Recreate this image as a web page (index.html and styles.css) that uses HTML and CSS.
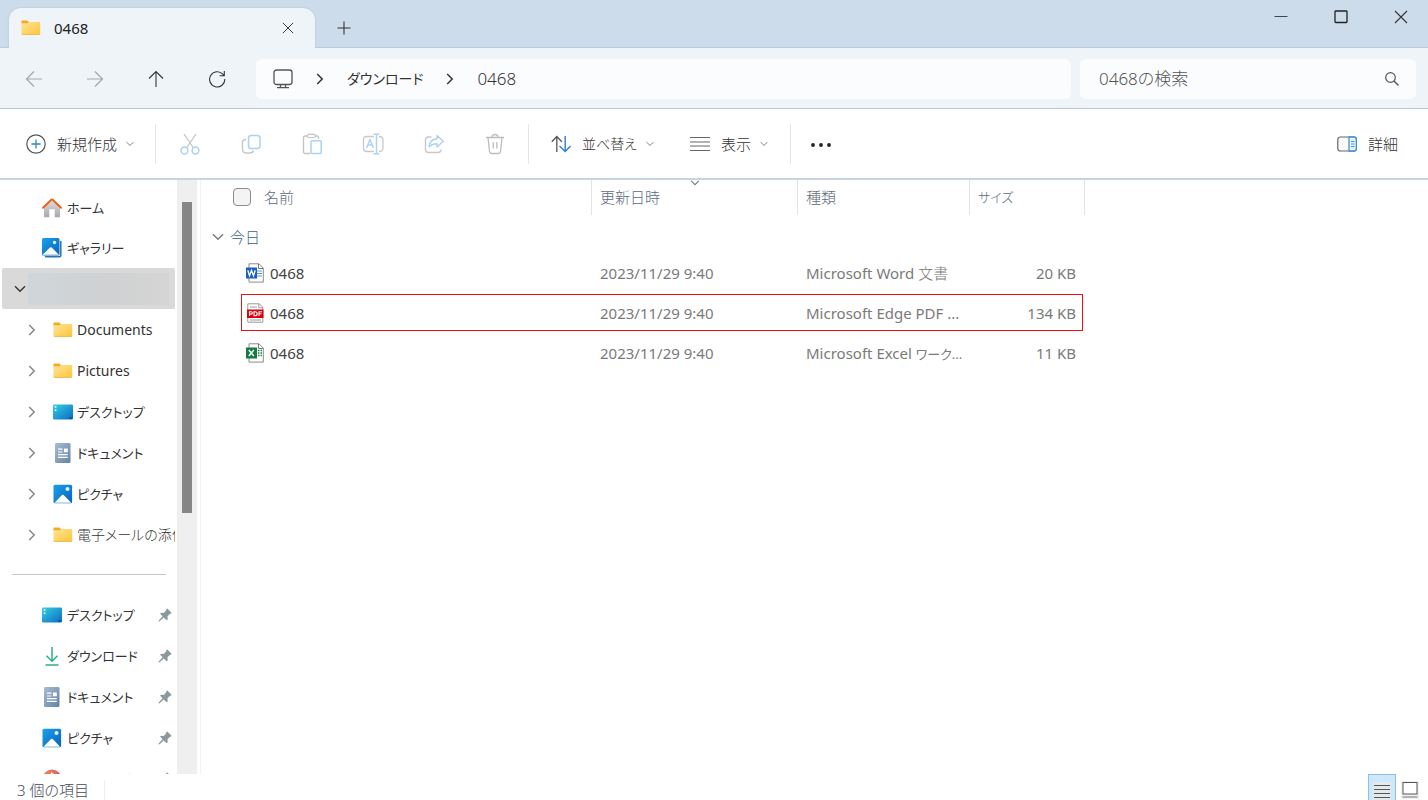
FILE: index.html
```html
<!DOCTYPE html>
<html lang="ja">
<head>
<meta charset="utf-8">
<meta name="viewport" content="width=device-width, initial-scale=1">
<title>0468</title>
<link rel="stylesheet" href="styles.css">
</head>
<body>
<svg class="sprite" aria-hidden="true">
  <defs>
    <linearGradient id="g-folder" x1="0" y1="0" x2="1" y2="1"><stop offset="0" stop-color="#ffe39a"/><stop offset="1" stop-color="#ffc737"/></linearGradient>
    <linearGradient id="g-blue" x1="0" y1="0" x2="1" y2="1"><stop offset="0" stop-color="#1ba0e8"/><stop offset="1" stop-color="#0a62c0"/></linearGradient>
    <linearGradient id="g-desk" x1="0" y1="0" x2="1" y2="1"><stop offset="0" stop-color="#35d0e2"/><stop offset="1" stop-color="#0a6ac4"/></linearGradient>
    <linearGradient id="g-doc" x1="0" y1="0" x2="1" y2="1"><stop offset="0" stop-color="#a9bdd2"/><stop offset="1" stop-color="#6283a8"/></linearGradient>
    <linearGradient id="g-home" x1="0" y1="0" x2="0" y2="1"><stop offset="0" stop-color="#dedede"/><stop offset="1" stop-color="#a9a9a9"/></linearGradient>
    <linearGradient id="g-music" x1="0" y1="0" x2="1" y2="0"><stop offset="0" stop-color="#ee8a5e"/><stop offset="1" stop-color="#dc5d5a"/></linearGradient>
  </defs>
  <symbol id="folder" viewBox="0 0 20 20"><path d="M.5 4V3.200q0-.7.700-.7h5q.5 0 .8.400l1 1.600v2H.5z" fill="#f3ac1c"/><path d="M.5 5.200h6.500l1.200-1.200h10.300q.7 0 .7.700v11.100q0 .7-.7.700H1.200q-.7 0-.7-.7z" fill="url(#g-folder)"/><path d="M.8 16.400h18" stroke="#e8ae3a" stroke-width=".8"/></symbol>
  <symbol id="home" viewBox="0 0 20 20"><path d="M2 9l8-7 8 7v9.500q0 .7-.7.700h-4.600v-8H7.300v8H2.700q-.7 0-.7-.7z" fill="url(#g-home)"/><path d="M1 9.800l8.300-8q.7-.6 1.400 0l8.300 8" fill="none" stroke="#e8661c" stroke-width="2" stroke-linecap="round" stroke-linejoin="round"/></symbol>
  <symbol id="gallery" viewBox="0 0 20 20"><path d="M18.800 3.500v14.300q0 1-1 1H3.500" fill="none" stroke="#2a72b8" stroke-width="1.500" stroke-linecap="round"/><rect width="17.500" height="17.500" rx="1.500" fill="url(#g-blue)"/><circle cx="12.500" cy="4.500" r="1.700" fill="#d8f4ff"/><path d="M.5 16.800L8 9.600q.8-.7 1.600 0l7.300 7.200z" fill="#fff"/></symbol>
  <symbol id="picture" viewBox="0 0 20 20"><rect x=".5" y=".7" width="18.600" height="18.600" rx="1.500" fill="url(#g-blue)"/><circle cx="14.500" cy="5" r="2" fill="#d8f4ff"/><path d="M1.500 18.700L9 11q.8-.7 1.600 0l7.600 7.700z" fill="#fff"/></symbol>
  <symbol id="desktop" viewBox="0 0 20 20"><rect x="0" y="2.500" width="20" height="15" rx="1.200" fill="url(#g-desk)"/><path d="M1.800 4.200h1.600v1.600H1.800zM1.800 7.400h1.600V9H1.800z" fill="#fff"/><path d="M16.200 16h2.600" stroke="#063d83"/></symbol>
  <symbol id="document" viewBox="0 0 20 20"><rect x="2" y="0" width="15.500" height="20" rx="1.300" fill="url(#g-doc)"/><path d="M5 6.200h4.500M5 9h4.500M5 11.700h9.700M5 14.300h9.700" stroke="#fff" stroke-width="1.200"/><rect x="11" y="5.500" width="3.800" height="3.800" fill="#fff"/></symbol>
  <symbol id="download" viewBox="0 0 20 20"><path d="M10 1v14M4.500 9.800L10 15.300l5.500-5.500M3.500 19h13" fill="none" stroke="#2bb08c" stroke-width="1.500"/></symbol>
  <symbol id="music" viewBox="0 0 20 20"><circle cx="10" cy="10" r="9.500" fill="url(#g-music)"/><path d="M9.700 14V4.500l4 2.500" fill="none" stroke="#fff" stroke-width="1.600"/><circle cx="8" cy="14" r="2.200" fill="#fff"/></symbol>
  <symbol id="pin" viewBox="0 0 14 14"><path d="M8.600.8q.5-.5 1 0l3.700 3.800q.5.500-.1.900l-1.400.4-2.300 2.400.2 2.700q0 .5-.4.800l-.7.500-2.900-2.900L1.600 13.300.5 13.500l.2-1.100 3.900-4.100-2.500-2.500.6-.7q.3-.4.800-.4l2.300.2L8 2.400z" fill="#8d989e"/></symbol>
  <symbol id="chev-right" viewBox="0 0 10 12"><path d="M2.200 1l5 5-5 5" fill="none" stroke="currentColor" stroke-width="1.500"/></symbol>
  <symbol id="chev-down" viewBox="0 0 12 8"><path d="M1 1.200l5 5 5-5" fill="none" stroke="currentColor" stroke-width="1.400"/></symbol>
  <symbol id="plus" viewBox="0 0 14 14"><path d="M7 .5v13M.5 7h13" stroke="currentColor" stroke-width="1.100"/></symbol>
  <symbol id="close" viewBox="0 0 14 14"><path d="M1 1l12 12M13 1L1 13" stroke="currentColor" stroke-width="1.100"/></symbol>
</svg>

<div class="window">
  <header class="titlebar">
    <div class="tab">
      <svg class="icon"><use href="#folder"/></svg>
      <span class="tab-name">0468</span>
      <button class="plain tab-close" aria-label="タブを閉じる"><svg class="glyph small"><use href="#close"/></svg></button>
    </div>
    <button class="plain new-tab" aria-label="新しいタブ"><svg class="glyph"><use href="#plus"/></svg></button>
    <div class="caption">
      <button class="plain caption-btn" aria-label="最小化"><svg class="glyph" viewBox="0 0 14 14"><path d="M.5 6.500h13" stroke="#444"/></svg></button>
      <button class="plain caption-btn" aria-label="最大化"><svg class="glyph" viewBox="0 0 14 14"><rect x="1" y="1" width="12" height="11.500" rx=".8" fill="none" stroke="#222" stroke-width="1.300"/></svg></button>
      <button class="plain caption-btn" aria-label="閉じる"><svg class="glyph"><use href="#close"/></svg></button>
    </div>
  </header>

  <nav class="navbar" aria-label="ナビゲーション">
    <div class="history">
      <button class="plain nav-btn dim" aria-label="戻る"><svg class="nav-icon" viewBox="0 0 18 18"><path d="M17 9H1.500M9 1.500L1.500 9 9 16.500" fill="none" stroke="currentColor" stroke-width="1.200"/></svg></button>
      <button class="plain nav-btn dim" aria-label="進む"><svg class="nav-icon" viewBox="0 0 18 18"><path d="M1 9h15.500M9 1.500L16.500 9 9 16.500" fill="none" stroke="currentColor" stroke-width="1.200"/></svg></button>
      <button class="plain nav-btn" aria-label="上へ"><svg class="nav-icon" viewBox="0 0 18 18"><path d="M9 17V1.500M2 8.500l7-7 7 7" fill="none" stroke="currentColor" stroke-width="1.100"/></svg></button>
      <button class="plain nav-btn" aria-label="更新"><svg class="nav-icon" viewBox="0 0 18 18"><path d="M16.800 9A7.600 7.600 0 1 1 14.800 4.200L16 5.500M16.300 1v4.700h-4.700" fill="none" stroke="currentColor" stroke-width="1.100"/></svg></button>
    </div>
    <div class="address">
      <svg class="pc" viewBox="0 0 20 20"><rect x="1" y="1" width="18" height="14.500" rx="2.500" fill="none" stroke="#555" stroke-width="1.300"/><path d="M7.500 15.500v2.700M12.500 15.500v2.700M4 18.700h12" stroke="#555" stroke-width="1.300"/></svg>
      <svg class="chev"><use href="#chev-right"/></svg>
      <a class="crumb crumb-kana" href="#downloads">ダウンロード</a>
      <svg class="chev"><use href="#chev-right"/></svg>
      <a class="crumb" href="#0468">0468</a>
    </div>
    <div class="search">
      <input class="search-input" type="text" placeholder="0468の検索" aria-label="0468の検索">
      <svg class="search-icon" viewBox="0 0 14 14"><circle cx="5.500" cy="5.500" r="4.800" fill="none" stroke="#555" stroke-width="1.200"/><path d="M9 9l4.500 4.500" stroke="#555" stroke-width="1.400"/></svg>
    </div>
  </nav>

  <div class="toolbar" role="toolbar" aria-label="コマンド バー">
    <button class="plain command new">
      <svg class="icon" viewBox="0 0 20 20"><circle cx="10" cy="10" r="9.200" fill="none" stroke="#555" stroke-width="1.200"/><path d="M10 5.500v9M5.500 10h9" stroke="#2f86d0" stroke-width="1.300"/></svg>
      <span>新規作成</span><svg class="drop"><use href="#chev-down"/></svg>
    </button>
    <span class="divider"></span>
    <div class="actions">
      <button class="plain action" aria-label="切り取り" disabled><svg class="icon large" viewBox="0 0 22 22"><path d="M5 1l9.500 14M17 1L7.500 15" stroke="#c6c6c6" stroke-width="1.300"/><g fill="none" stroke="#abd2f3" stroke-width="1.500"><circle cx="5.500" cy="17.500" r="3.400"/><circle cx="16.500" cy="17.500" r="3.400"/></g></svg></button>
      <button class="plain action" aria-label="コピー" disabled><svg class="icon large" viewBox="0 0 22 22"><path d="M6 6.500H5.500q-3 0-3 3V16q0 4 4 4h3.500q3 0 3.500-2.500" fill="none" stroke="#c9c9c9" stroke-width="1.400"/><rect x="8.500" y="2.500" width="11.500" height="13" rx="2.800" fill="none" stroke="#abd2f3" stroke-width="1.500"/></svg></button>
      <button class="plain action" aria-label="貼り付け" disabled><svg class="icon large" viewBox="0 0 22 22"><path d="M9 20.500H4q-1.500 0-1.500-1.500V4.500Q2.500 3 4 3h2.500M14.500 3H16q1.500 0 1.500 1.500V6" fill="none" stroke="#c4c4c4" stroke-width="1.300"/><rect x="6.500" y="1.300" width="8" height="3.200" rx="1.500" fill="none" stroke="#c4c4c4" stroke-width="1.200"/><rect x="10" y="7.800" width="10.200" height="12.800" rx="1.200" fill="none" stroke="#abd2f3" stroke-width="1.500"/></svg></button>
      <button class="plain action" aria-label="名前の変更" disabled><svg class="icon large" viewBox="0 0 22 22"><path d="M12 3.500H4.500q-3 0-3 3v9q0 3 3 3H12M17 3.500q4 0 4 3.500v8q0 3.500-4 3.500" fill="none" stroke="#c9c9c9" stroke-width="1.300"/><path d="M4.500 15L8 6.500l3.500 8.500M5.600 12h4.900M14.500 1.500v19M11.500 1.200h6M11.500 20.700h6" fill="none" stroke="#abd2f3" stroke-width="1.400"/></svg></button>
      <button class="plain action" aria-label="共有" disabled><svg class="icon large" viewBox="0 0 22 22"><path d="M8.500 4H5.500Q2.500 4 2.500 7v9.500q0 3 3 3H15q3 0 3-3" fill="none" stroke="#c9c9c9" stroke-width="1.400"/><path d="M14 2.500l6.300 5.800L14 14v-3.200q-4.500-.3-8 3Q6.700 6.500 14 5.800z" fill="none" stroke="#abd2f3" stroke-width="1.400" stroke-linejoin="round"/></svg></button>
      <button class="plain action" aria-label="削除" disabled><svg class="icon large" viewBox="0 0 22 22"><path d="M2 4.500h18M4 4.500l1.500 14q.2 2 2 2h7q1.800 0 2-2L18 4.500M8 4.300Q8 1.500 11 1.500t3 2.800M9.200 9v6.500M12.800 9v6.500" fill="none" stroke="#bdbdbd" stroke-width="1.300"/></svg></button>
    </div>
    <span class="divider"></span>
    <button class="plain command sort">
      <svg class="icon" viewBox="0 0 20 20"><path d="M5.800 18V2.500M.8 7.800l5-5.300 5 5.300" fill="none" stroke="#555" stroke-width="1.300"/><path d="M14.200 2v15.500M8.500 12l5.700 5.500 5.300-5.500" fill="none" stroke="#2f7fcf" stroke-width="1.400"/></svg>
      <span>並べ替え</span><svg class="drop"><use href="#chev-down"/></svg>
    </button>
    <button class="plain command view">
      <svg class="icon" viewBox="0 0 20 20"><path d="M0 3.500h20M0 8h20M0 12h20M0 16.500h20" stroke="#666" stroke-width="1.200"/></svg>
      <span>表示</span><svg class="drop"><use href="#chev-down"/></svg>
    </button>
    <span class="divider"></span>
    <button class="plain more" aria-label="もっと見る"><svg class="icon" viewBox="0 0 20 20"><g fill="#222"><circle cx="2" cy="11" r="1.900"/><circle cx="10" cy="11" r="1.900"/><circle cx="18" cy="11" r="1.900"/></g></svg></button>
    <button class="plain command details">
      <svg class="icon" viewBox="0 0 20 20"><rect x=".8" y="3" width="18.500" height="14" rx="2.500" fill="#fafafa" stroke="#666" stroke-width="1.200"/><path d="M12 3h5q2.300 0 2.300 2.500v9Q19.300 17 17 17h-5z" fill="#eaf5fe" stroke="#3e90d8" stroke-width="1.300"/><path d="M14 7.500h3.500M14 10h3.500M14 12.500h3.500" stroke="#3e90d8" stroke-width="1.200"/></svg>
      <span>詳細</span>
    </button>
  </div>

  <div class="body">
    <aside class="sidebar">
      <ul class="tree">
        <li class="node short"><svg class="icon"><use href="#home"/></svg><span class="label kana">ホーム</span></li>
        <li class="node short"><svg class="icon"><use href="#gallery"/></svg><span class="label kana">ギャラリー</span></li>
        <li class="node selected"><svg class="open"><use href="#chev-down"/></svg><span class="masked"></span></li>
        <li class="node child"><svg class="chev"><use href="#chev-right"/></svg><svg class="icon"><use href="#folder"/></svg><span class="label">Documents</span></li>
        <li class="node child"><svg class="chev"><use href="#chev-right"/></svg><svg class="icon"><use href="#folder"/></svg><span class="label">Pictures</span></li>
        <li class="node child"><svg class="chev"><use href="#chev-right"/></svg><svg class="icon"><use href="#desktop"/></svg><span class="label kana">デスクトップ</span></li>
        <li class="node child"><svg class="chev"><use href="#chev-right"/></svg><svg class="icon"><use href="#document"/></svg><span class="label kana">ドキュメント</span></li>
        <li class="node child"><svg class="chev"><use href="#chev-right"/></svg><svg class="icon"><use href="#picture"/></svg><span class="label kana">ピクチャ</span></li>
        <li class="node child"><svg class="chev"><use href="#chev-right"/></svg><svg class="icon"><use href="#folder"/></svg><span class="label light">電子メールの添付</span></li>
        <li class="rule" role="separator"></li>
        <li class="node"><svg class="icon"><use href="#desktop"/></svg><span class="label kana">デスクトップ</span><svg class="pin"><use href="#pin"/></svg></li>
        <li class="node"><svg class="icon"><use href="#download"/></svg><span class="label kana">ダウンロード</span><svg class="pin"><use href="#pin"/></svg></li>
        <li class="node"><svg class="icon"><use href="#document"/></svg><span class="label kana">ドキュメント</span><svg class="pin"><use href="#pin"/></svg></li>
        <li class="node"><svg class="icon"><use href="#picture"/></svg><span class="label kana">ピクチャ</span><svg class="pin"><use href="#pin"/></svg></li>
        <li class="node"><svg class="icon"><use href="#music"/></svg><span class="label kana">ミュージック</span><svg class="pin"><use href="#pin"/></svg></li>
      </ul>
      <div class="scrollbar"><div class="thumb"></div></div>
    </aside>

    <main class="files">
      <table class="list">
        <colgroup><col class="c-gutter"><col class="c-name"><col class="c-date"><col class="c-type"><col class="c-size"></colgroup>
        <thead>
          <tr>
            <th class="head-name" colspan="2"><div class="name-cell"><input class="check" type="checkbox" aria-label="すべて選択"><span>名前</span></div></th>
            <th class="head-date">更新日時<svg class="sorted"><use href="#chev-down"/></svg></th>
            <th>種類</th>
            <th class="kana">サイズ</th>
          </tr>
        </thead>
        <tbody>
          <tr class="group"><td colspan="5"><div class="group-name"><svg class="fold"><use href="#chev-down"/></svg>今日</div></td></tr>
          <tr class="file">
            <td></td>
            <td><div class="file-name"><svg class="icon" viewBox="0 0 20 20"><path d="M4 .8h10l4.300 4.300v14H4z" fill="#fff" stroke="#8c8c8c"/><path d="M13.500.8v4.700h4.800" fill="none" stroke="#777"/><path d="M12 8h5M12 10.500h5M12 13h5" stroke="#5b9bdc"/><rect x="1" y="4.500" width="11" height="11" fill="#1d5fbd"/><path d="M2.800 7.200l1.700 5.500 2-5.300 2 5.300 1.700-5.500" fill="none" stroke="#fff" stroke-width="1.300"/></svg>0468</div></td>
            <td>2023/11/29 9:40</td><td>Microsoft Word <span class="light">文書</span></td><td class="size">20 KB</td>
          </tr>
          <tr class="file marked">
            <td></td>
            <td><div class="file-name"><svg class="icon" viewBox="0 0 20 20"><path d="M2.800.8h11.500l3.500 3.500v14.900h-15z" fill="#fff" stroke="#999"/><path d="M13.800.8v4h4M5 4h7M5 17h11" fill="none" stroke="#999"/><rect x="2" y="6.500" width="16.500" height="8.500" fill="#d9000d"/><path d="M4.500 13V8.700h1.700q1.200 0 1.200 1.200t-1.200 1.200H4.500M9 8.700h1q2.200 0 2.200 2t-2.200 2H9zM14 13V8.700h3M14 10.800h2.500" fill="none" stroke="#fff" stroke-width="1.100"/></svg>0468</div></td>
            <td>2023/11/29 9:40</td><td>Microsoft Edge PDF ...</td><td class="size">134 KB</td>
          </tr>
          <tr class="file">
            <td></td>
            <td><div class="file-name"><svg class="icon" viewBox="0 0 20 20"><path d="M4 .8h10l4.300 4.300v14H4z" fill="#fff" stroke="#8c8c8c"/><path d="M13.500.8v4.700h4.800" fill="none" stroke="#777"/><path d="M13 7.500h1.500M15.500 7.500H17M13 10h1.500M15.500 10H17M13 12.500h1.500M15.500 12.500H17" stroke="#1d7f4a" stroke-width="1.300"/><rect x="1" y="4.500" width="11" height="11" fill="#127b41"/><path d="M3.800 7l5 6M8.800 7l-5 6" stroke="#fff" stroke-width="1.500"/></svg>0468</div></td>
            <td>2023/11/29 9:40</td><td>Microsoft Excel <span class="kana">ワーク...</span></td><td class="size">11 KB</td>
          </tr>
        </tbody>
      </table>
    </main>
  </div>

  <footer class="statusbar">
    <span class="count">3 個の項目</span>
    <div class="modes">
      <button class="plain mode active" aria-label="詳細表示"><svg class="mode-icon" viewBox="0 0 18 18"><rect width="18" height="18" fill="#e4e9ed"/><path d="M1 3.500h16M1 7.500h16M1 11.500h16M1 15.500h16" stroke="#555"/></svg></button>
      <button class="plain mode" aria-label="大アイコン表示"><svg class="mode-icon" viewBox="0 0 18 18"><rect width="18" height="18" fill="#f1f1f1"/><rect x="2" y="1.500" width="14" height="11.500" fill="#fff" stroke="#555"/><path d="M1.500 16h15" stroke="#777"/></svg></button>
    </div>
  </footer>
</div>
</body>
</html>
```
FILE: styles.css
```css
* {
  box-sizing: border-box;
}

body {
  margin: 0;
  font-family: "Noto Sans", "Noto Sans CJK JP", sans-serif;
  font-size: 15px;
  line-height: 20px;
  color: #333;
  background: #fff;
  font-feature-settings: "palt";
}

.sprite {
  position: absolute;
  width: 0;
  height: 0;
}

svg {
  display: block;
  flex: none;
}

.plain {
  display: flex;
  align-items: center;
  justify-content: center;
  padding: 0;
  border: 0;
  background: none;
  color: inherit;
  font: inherit;
  font-feature-settings: inherit;
}

.icon {
  width: 20px;
  height: 20px;
}

.large {
  width: 22px;
  height: 22px;
}

.glyph {
  width: 14px;
  height: 14px;
}

.small {
  width: 12px;
  height: 12px;
}

.light {
  font-weight: 300;
}

.window {
  display: flex;
  flex-direction: column;
  height: 100vh;
}

/* Title bar */
.titlebar {
  display: flex;
  height: 48px;
  padding-left: 9px;
  background: #ccdcea;
  border-bottom: 1px solid #b9cbdc;
}

.tab {
  display: flex;
  align-items: center;
  width: 306px;
  margin-top: 8px;
  margin-bottom: -1px;
  padding: 0 21px 0 12px;
  border-radius: 12px 12px 0 0;
  background: #eff4f9;
  box-shadow: 0 0 2px #aabdce;
  clip-path: inset(-3px -3px 0 -3px);
}

.tab-name {
  flex: 1;
  margin-left: 13px;
  color: #222;
}

.new-tab {
  width: 58px;
  padding-top: 8px;
}

.caption {
  display: flex;
  gap: 6px;
  margin-left: auto;
}

.caption-btn {
  width: 54px;
  height: 33px;
}

/* Navigation bar */
.navbar {
  display: grid;
  grid-template-columns: auto 815fr 336fr;
  align-items: center;
  gap: 9px;
  height: 61px;
  padding: 1px 12px 0 3px;
  background: #eff4f9;
  border-bottom: 1px solid #b5c8da;
}

.history {
  display: flex;
}

.nav-btn {
  width: 61px;
  height: 40px;
}

.dim {
  color: #a3a7ab;
}

.nav-icon {
  width: 18px;
  height: 18px;
}

.address,
.search {
  display: flex;
  align-items: center;
  height: 40px;
  border-radius: 6px;
  background: #fbfcfe;
}

.address {
  gap: 22px;
  padding-left: 17px;
}

.pc {
  width: 20px;
  height: 20px;
}

.chev {
  width: 10px;
  height: 12px;
}

.crumb {
  color: #333;
  font-size: 17px;
  font-weight: 300;
  text-decoration: none;
}

.crumb-kana {
  font-size: 14px;
  font-weight: 400;
}

.search {
  padding: 0 17px 0 19px;
}

.search-input {
  flex: 1;
  min-width: 0;
  padding: 0;
  border: 0;
  outline: 0;
  background: none;
  font: inherit;
  font-size: 17px;
  font-weight: 300;
}

.search-input::placeholder {
  color: #555;
}

.search-icon {
  width: 14px;
  height: 14px;
}

/* Command bar */
.toolbar {
  display: flex;
  align-items: center;
  height: 71px;
  padding: 0 30px 0 26px;
  border-bottom: 2px solid #c8d4df;
  font-weight: 300;
}

.command {
  gap: 9px;
}

.command .icon {
  margin-right: 2px;
}

.drop {
  width: 8px;
  height: 6px;
  color: #777;
}

.new {
  margin-right: 21px;
}

.divider {
  width: 1px;
  height: 40px;
  background: #e6e6e6;
}

.actions {
  display: flex;
  margin: 0 3px;
}

.action {
  width: 61px;
  height: 40px;
}

.sort {
  margin: 0 36px 0 22px;
  font-size: 14px;
}

.view {
  margin-right: 22px;
}

.more {
  margin-left: 20px;
}

.details {
  margin-left: auto;
}

/* Sidebar */
.body {
  display: flex;
  flex: 1;
  min-height: 0;
}

.sidebar {
  display: flex;
  flex: none;
  width: 201px;
  border-right: 1px solid #f3f3f3;
  overflow: hidden;
}

.tree {
  flex: 1;
  min-width: 0;
  margin: 0;
  padding: 8px 2px 0 2px;
  list-style: none;
}

.node {
  display: flex;
  align-items: center;
  gap: 5px;
  height: 41px;
  padding-left: 40px;
}

.short {
  height: 40px;
}

.child {
  gap: 4px;
  padding-left: 25px;
}

.child .chev {
  margin-right: 12px;
  color: #888;
}

.label {
  flex: 1;
  overflow: hidden;
  white-space: nowrap;
  font-size: 14px;
}

.kana {
  font-size: 13px;
}

.selected {
  gap: 2px;
  padding: 0 6px 0 12px;
  border-radius: 2px;
  background: #d9d9d9;
}

.open {
  width: 12px;
  height: 8px;
}

.masked {
  flex: 1;
  height: 32px;
  background: linear-gradient(90deg, #cfd6da, #d0d1d2 60%, #d5d5d5);
}

.pin {
  width: 14px;
  height: 14px;
  margin-right: 3px;
}

.rule {
  height: 39px;
  margin: 0 9px 0 10px;
  background: linear-gradient(#c8c8c8, #c8c8c8) center / 100% 1px no-repeat;
}

.scrollbar {
  width: 20px;
  margin-right: 3px;
  padding: 22px 5px 0;
  background: #efefef;
}

.thumb {
  height: 311px;
  background: #868686;
}

/* File list */
.files {
  flex: 1;
  min-width: 0;
  overflow: hidden;
}

.list {
  width: 884px;
  table-layout: fixed;
  border-collapse: separate;
  border-spacing: 0;
}

.c-gutter {
  width: 40px;
}

.c-name {
  width: 351px;
}

.c-date {
  width: 206px;
}

.c-type {
  width: 172px;
}

.c-size {
  width: 115px;
}

.list th {
  height: 35px;
  padding: 0 8px 2px;
  border-right: 1px solid #e4e4e4;
  color: #5c6b7c;
  font-weight: 300;
  text-align: left;
}

.list .head-name {
  padding: 0 0 2px 32px;
}

.head-date {
  position: relative;
}

.sorted {
  position: absolute;
  top: 0;
  left: calc(50% - 5px);
  width: 10px;
  height: 6px;
  color: #777;
}

.name-cell,
.group-name,
.file-name {
  display: flex;
  align-items: center;
}

.name-cell {
  gap: 13px;
}

.check {
  width: 18px;
  height: 18px;
  margin: 0;
  border: 1px solid #8c8c8c;
  border-radius: 4px;
  background: #f4f4f4;
  appearance: none;
}

.list td {
  height: 40px;
  padding: 0 8px;
  color: #7a7a7a;
  white-space: nowrap;
}

.list .group td {
  height: 38px;
  padding: 5px 0 0 11px;
  color: #3d5f8d;
  font-weight: 300;
}

.group-name {
  gap: 6px;
}

.fold {
  width: 12px;
  height: 8px;
  color: #777;
}

.list .file-name {
  gap: 5px;
  margin-left: -4px;
  color: #444;
}

.list .size {
  padding-right: 9px;
  text-align: right;
}

.marked {
  position: relative;
}

.marked::after {
  content: "";
  position: absolute;
  inset: 1px 2px 2px 40px;
  border: 1px solid #f01010;
}

/* Status bar */
.statusbar {
  display: flex;
  align-items: flex-end;
  justify-content: space-between;
  height: 26px;
  padding: 0 4px 0 17px;
  overflow: hidden;
}

.count {
  height: 20px;
  padding-right: 15px;
  border-right: 1px solid #eee;
  color: #3f4a58;
  font-weight: 300;
}

.modes {
  display: flex;
}

.mode {
  width: 28px;
  height: 26px;
  padding-top: 6px;
}

.mode-icon {
  width: 18px;
  height: 18px;
}

.active {
  border: 1px solid #8dc0e8;
  border-bottom: 0;
  background: #cde8f8;
}
```
